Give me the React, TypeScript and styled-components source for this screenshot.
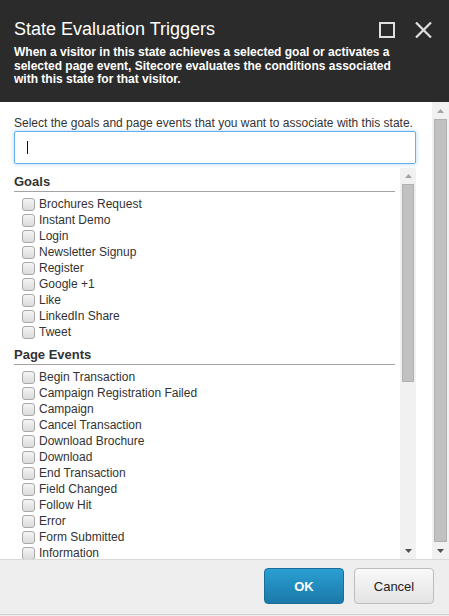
import React from "react";
import styled, { createGlobalStyle } from "styled-components";

const Global = createGlobalStyle`
  html, body { margin: 0; padding: 0; background: #efefef; }
  body { font-family: "Liberation Sans", Arial, sans-serif; }
  * { box-sizing: border-box; }
`;

const Dialog = styled.div`
  width: 449px;
  height: 615px;
  display: flex;
  flex-direction: column;
  background: #fff;
  overflow: hidden;
`;

const Header = styled.header`
  background: #2b2b2b;
  color: #fff;
  padding: 19px 17px 16px 14px;
  flex: none;
  height: 102px;
`;

const TitleRow = styled.div`
  display: flex;
  align-items: flex-start;
  justify-content: space-between;
`;

const Title = styled.h1`
  margin: 0;
  font-size: 18px;
  line-height: 21px;
  font-weight: normal;
`;

const Tools = styled.div`
  display: flex;
  gap: 19px;
  padding-top: 3px;
`;

const IconBtn = styled.span`
  display: block;
  width: 17px;
  height: 16px;
  color: #e0e0e0;
`;

const Subtitle = styled.p`
  margin: 6px 0 0;
  font-size: 12px;
  font-weight: bold;
  line-height: 13.5px;
  max-width: 380px;
`;

const Body = styled.div`
  flex: 1;
  min-height: 0;
  display: flex;
`;

const Content = styled.div`
  flex: 1;
  min-width: 0;
  display: flex;
  flex-direction: column;
  padding: 14px 16px 0 14px;
`;

const Instruction = styled.div`
  font-size: 12px;
  line-height: 14px;
  color: #333;
  white-space: nowrap;
`;

const SearchBox = styled.div`
  margin-top: 1px;
  height: 33px;
  border: 1px solid #66afe9;
  border-radius: 2px;
  box-shadow: 0 0 4px rgba(102, 175, 233, 0.55);
  display: flex;
  align-items: center;
  padding-left: 12px;
`;

const Caret = styled.span`
  display: block;
  width: 1px;
  height: 13px;
  background: #111;
`;

const ListBox = styled.div`
  margin-top: 4px;
  flex: 1;
  min-height: 0;
  display: flex;
`;

const ListScroll = styled.div`
  flex: 1;
  min-width: 0;
  overflow: hidden;
  padding-top: 6px;
`;

const GroupHeader = styled.div<{ $first?: boolean }>`
  margin: ${(p) => (p.$first ? "0" : "7px")} 5px 0 0;
  font-size: 13px;
  font-weight: bold;
  line-height: 16px;
  color: #333;
  padding-bottom: 1px;
  border-bottom: 1px solid #a3a3a3;
`;

const Items = styled.ul`
  list-style: none;
  margin: 4px 0 0;
  padding: 0 0 0 8px;
`;

const Item = styled.li`
  display: flex;
  align-items: center;
  gap: 4px;
  height: 16px;
  font-size: 12px;
  color: #333;
  white-space: nowrap;
`;

const Check = styled.span`
  display: block;
  width: 13px;
  height: 13px;
  border: 1px solid #a9a9a9;
  border-radius: 3px;
  background: linear-gradient(#f4f4f4, #dcdcdc);
  flex: none;
`;

const ScrollTrack = styled.div<{ $w: number }>`
  width: ${(p) => p.$w}px;
  flex: none;
  background: #f1f1f1;
  display: flex;
  flex-direction: column;
`;

const ArrowBtn = styled.div<{ $h: number }>`
  height: ${(p) => p.$h}px;
  flex: none;
  display: flex;
  align-items: center;
  justify-content: center;
`;

const Thumb = styled.div<{ $grow?: boolean; $h?: number }>`
  flex: ${(p) => (p.$grow ? "1" : "none")};
  height: ${(p) => (p.$h ? `${p.$h}px` : "auto")};
  margin: 0 2px;
  background: #c1c1c1;
  border: 1px solid #b0b0b0;
`;

const Spacer = styled.div`
  flex: 1;
`;

const Footer = styled.footer`
  flex: none;
  height: 56px;
  background: #eeeeee;
  border-top: 1px solid #dadada;
  border-bottom: 1px solid #d0d0d0;
  display: flex;
  justify-content: flex-end;
  align-items: flex-start;
  gap: 10px;
  padding: 8px 15px 0 0;
`;

const Button = styled.button<{ $primary?: boolean }>`
  width: 80px;
  height: 36px;
  border-radius: 4px;
  font-family: "Liberation Sans", Arial, sans-serif;
  font-size: 13px;
  cursor: pointer;
  border: 1px solid ${(p) => (p.$primary ? "#1b6d97" : "#bdbdbd")};
  background: ${(p) =>
    p.$primary
      ? "linear-gradient(#2b9fd3, #1b79a8)"
      : "linear-gradient(#f9f9f9, #e3e3e3)"};
  color: ${(p) => (p.$primary ? "#fff" : "#222")};
  font-weight: ${(p) => (p.$primary ? "bold" : "normal")};
`;

const Arrow = ({ up, color }: { up?: boolean; color: string }) => (
  <svg width="7" height="4" viewBox="0 0 7 4">
    <path d={up ? "M0 4 L3.5 0 L7 4 Z" : "M0 0 L3.5 4 L7 0 Z"} fill={color} />
  </svg>
);

const goals = [
  "Brochures Request",
  "Instant Demo",
  "Login",
  "Newsletter Signup",
  "Register",
  "Google +1",
  "Like",
  "LinkedIn Share",
  "Tweet",
];

const events = [
  "Begin Transaction",
  "Campaign Registration Failed",
  "Campaign",
  "Cancel Transaction",
  "Download Brochure",
  "Download",
  "End Transaction",
  "Field Changed",
  "Follow Hit",
  "Error",
  "Form Submitted",
  "Information",
];

export default function App() {
  return (
    <>
      <Global />
      <Dialog>
        <Header>
          <TitleRow>
            <Title>State Evaluation Triggers</Title>
            <Tools>
              <IconBtn>
                <svg width="16" height="16" viewBox="0 0 16 16">
                  <rect x="1" y="1" width="14" height="14" fill="none" stroke="currentColor" strokeWidth="2" />
                </svg>
              </IconBtn>
              <IconBtn>
                <svg width="17" height="16" viewBox="0 0 17 16">
                  <path d="M1 0.5 L16 15.5 M16 0.5 L1 15.5" stroke="currentColor" strokeWidth="2.2" />
                </svg>
              </IconBtn>
            </Tools>
          </TitleRow>
          <Subtitle>
            When a visitor in this state achieves a selected goal or activates a selected page
            event, Sitecore evaluates the conditions associated with this state for that visitor.
          </Subtitle>
        </Header>
        <Body>
          <Content>
            <Instruction>
              Select the goals and page events that you want to associate with this state.
            </Instruction>
            <SearchBox>
              <Caret />
            </SearchBox>
            <ListBox>
              <ListScroll>
                <GroupHeader $first>Goals</GroupHeader>
                <Items>
                  {goals.map((g) => (
                    <Item key={g}>
                      <Check />
                      {g}
                    </Item>
                  ))}
                </Items>
                <GroupHeader>Page Events</GroupHeader>
                <Items>
                  {events.map((g) => (
                    <Item key={g}>
                      <Check />
                      {g}
                    </Item>
                  ))}
                </Items>
              </ListScroll>
              <ScrollTrack $w={16}>
                <ArrowBtn $h={16}>
                  <Arrow up color="#a3a3a3" />
                </ArrowBtn>
                <Thumb $h={198} />
                <Spacer />
                <ArrowBtn $h={16}>
                  <Arrow color="#505050" />
                </ArrowBtn>
              </ScrollTrack>
            </ListBox>
          </Content>
          <ScrollTrack $w={17}>
            <ArrowBtn $h={17}>
              <Arrow up color="#a3a3a3" />
            </ArrowBtn>
            <Thumb $grow />
            <ArrowBtn $h={17}>
              <Arrow color="#505050" />
            </ArrowBtn>
          </ScrollTrack>
        </Body>
        <Footer>
          <Button $primary>OK</Button>
          <Button>Cancel</Button>
        </Footer>
      </Dialog>
    </>
  );
}
